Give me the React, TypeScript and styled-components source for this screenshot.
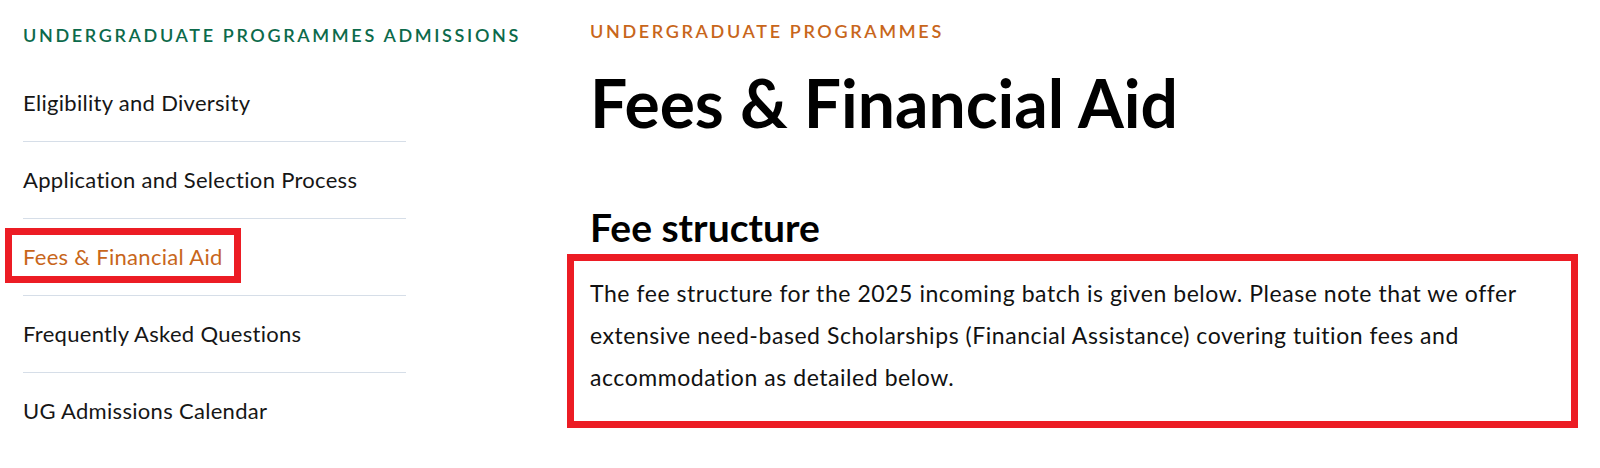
import * as React from 'react';
import styled, { createGlobalStyle } from 'styled-components';

const GlobalStyle = createGlobalStyle`
  html, body {
    margin: 0;
    padding: 0;
    background: #ffffff;
  }
  body {
    font-family: Lato, "Open Sans", sans-serif;
    color: #111111;
  }
`;

const Page = styled.div`
  display: grid;
  grid-template-columns: 383px 1fr;
  column-gap: 184px;
  padding: 0 22px 0 23px;
  width: 1600px;
  box-sizing: border-box;
`;

const Sidebar = styled.nav`
  padding-top: 23px;
`;

const Eyebrow = styled.div<{ $tone: 'green' | 'orange' }>`
  font-size: 18px;
  line-height: 24px;
  font-weight: 600;
  letter-spacing: 2.65px;
  text-transform: uppercase;
  color: ${(p) => (p.$tone === 'green' ? '#0c6a4b' : '#c8661b')};
  white-space: nowrap;
`;

const NavList = styled.ul`
  list-style: none;
  margin: 18px 0 0;
  padding: 0;
`;

const NavItem = styled.li`
  padding: 22px 0;
  border-bottom: 1px solid #d6dee8;

  &:last-child {
    border-bottom: none;
  }
`;

const NavLink = styled.a<{ $active?: boolean }>`
  display: block;
  width: fit-content;
  font-size: 22px;
  line-height: 32px;
  letter-spacing: 0.3px;
  color: ${(p) => (p.$active ? '#c8661b' : '#161616')};
  text-decoration: none;
  ${(p) =>
    p.$active &&
    `
    border: 7px solid #ec1c24;
    padding: 6px 11px 3px;
    margin: -13px 0 -10px -18px;
  `}
`;

const Main = styled.main`
  padding-top: 19px;
`;

const Title = styled.h1`
  margin: 25px 0 0;
  font-size: 66px;
  line-height: 70px;
  font-weight: 700;
  color: #000000;
`;

const SectionTitle = styled.h2`
  margin: 67px 0 0;
  font-size: 39px;
  line-height: 44px;
  font-weight: 700;
  color: #000000;
`;

const Highlight = styled.div`
  margin: 5px 0 0 -23px;
  border: 7px solid #ec1c24;
  padding: 11px 0 23px 16px;
`;

const Body = styled.p`
  margin: 0;
  font-size: 23px;
  line-height: 42px;
  letter-spacing: 0.55px;
  color: #111111;
`;

const items = [
  'Eligibility and Diversity',
  'Application and Selection Process',
  'Fees & Financial Aid',
  'Frequently Asked Questions',
  'UG Admissions Calendar',
];

export default function App() {
  return (
    <>
      <GlobalStyle />
      <Page>
        <Sidebar>
          <Eyebrow $tone="green">Undergraduate Programmes Admissions</Eyebrow>
          <NavList>
            {items.map((label) => (
              <NavItem key={label}>
                <NavLink href="#" $active={label === 'Fees & Financial Aid'}>
                  {label}
                </NavLink>
              </NavItem>
            ))}
          </NavList>
        </Sidebar>
        <Main>
          <Eyebrow $tone="orange">Undergraduate Programmes</Eyebrow>
          <Title>Fees &amp; Financial Aid</Title>
          <SectionTitle>Fee structure</SectionTitle>
          <Highlight>
            <Body>
              The fee structure for the 2025 incoming batch is given below. Please note that we offer
              extensive need-based Scholarships (Financial Assistance) covering tuition fees and
              accommodation as detailed below.
            </Body>
          </Highlight>
        </Main>
      </Page>
    </>
  );
}
